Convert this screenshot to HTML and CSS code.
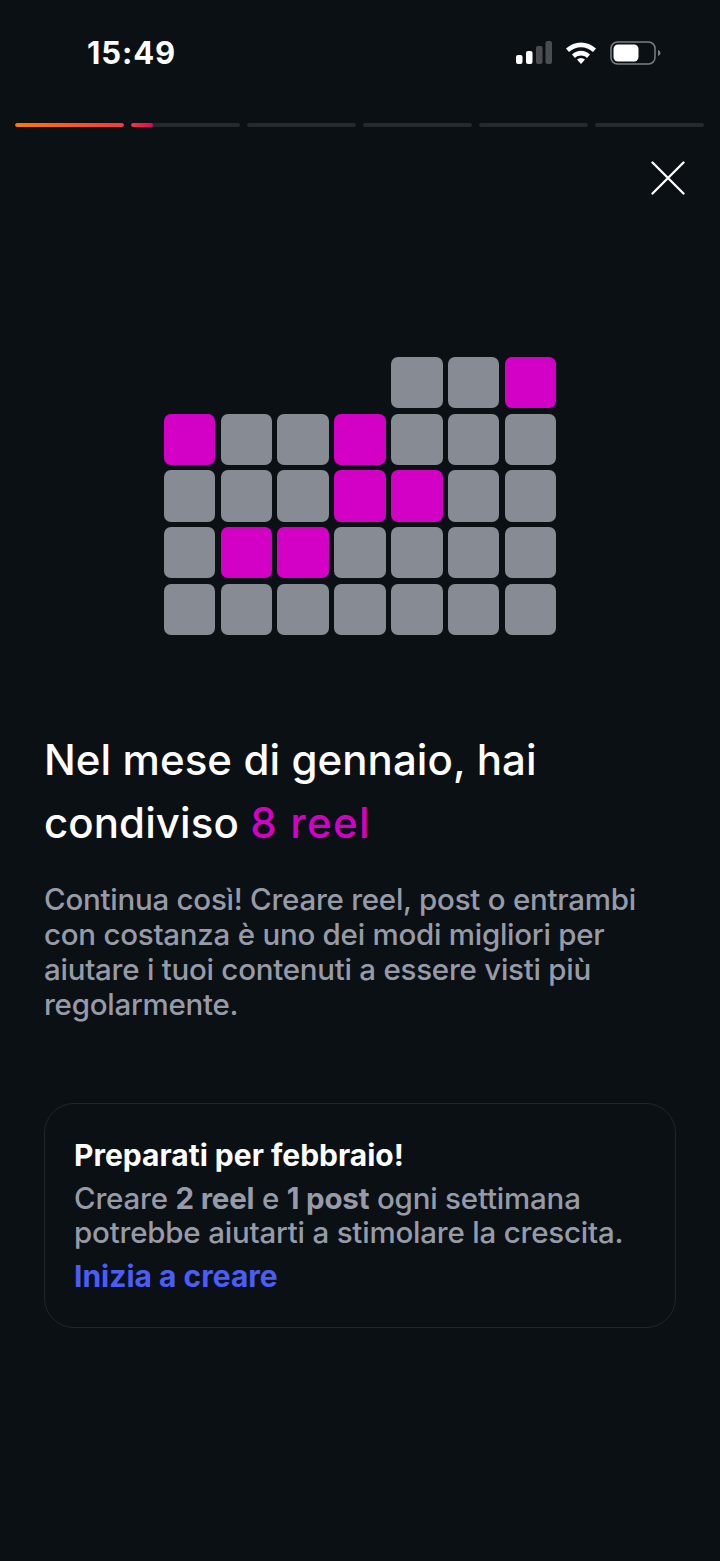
FILE: index.html
```html
<!DOCTYPE html>
<html lang="it">
<head>
    <meta charset="UTF-8">
    <meta name="viewport" content="width=device-width, initial-scale=1.0">
    <title>Reel di gennaio</title>
    <link rel="stylesheet" href="styles.css">
</head>
<body>
    <div class="status-bar">
        <span class="clock">15:49</span>
        <div class="status-icons">
            <svg class="signal" width="36" height="24" viewBox="0 0 36 24">
                <rect x="0" y="14" width="6.5" height="9" rx="2" fill="#fff"/>
                <rect x="10" y="10" width="6.5" height="13" rx="2" fill="#fff"/>
                <rect x="20" y="5" width="6.5" height="18" rx="2" fill="#4a4d50"/>
                <rect x="29.500" y="0" width="6.5" height="23" rx="2" fill="#4a4d50"/>
            </svg>
            <svg class="wifi" width="32" height="24" viewBox="0 0 32 24">
                <path d="M1 7.500 C9.500 -0.500 22.500 -0.500 31 7.500 L28 11 C21 4.500 11 4.500 4 11 Z" fill="#fff"/>
                <path d="M7 13.500 C12.500 8.500 19.500 8.500 25 13.500 L22 17 C18.500 13.800 13.500 13.800 10 17 Z" fill="#fff"/>
                <path d="M12 18.500 C14.500 16.500 17.500 16.500 20 18.500 L16 23 Z" fill="#fff"/>
            </svg>
            <svg class="battery" width="51" height="24" viewBox="0 0 51 24">
                <rect x="1" y="1" width="44" height="22" rx="6.500" fill="none" stroke="#7c7f82" stroke-width="1.500"/>
                <rect x="3.500" y="3.500" width="25" height="17" rx="4.500" fill="#fff"/>
                <path d="M48 9 C50 10 50.500 11 50.500 12 C50.500 13 50 14 48 15 Z" fill="#7c7f82"/>
            </svg>
        </div>
    </div>

    <div class="progress">
        <div class="segment"><div class="fill fill-done"></div></div>
        <div class="segment"><div class="fill fill-current"></div></div>
        <div class="segment"></div>
        <div class="segment"></div>
        <div class="segment"></div>
        <div class="segment"></div>
    </div>

    <div class="close-row">
        <svg class="close" width="34" height="34" viewBox="0 0 34 34">
            <path d="M1.500 1.500 L32.500 32.500 M32.500 1.500 L1.500 32.500" stroke="#fff" stroke-width="2.300" stroke-linecap="round"/>
        </svg>
    </div>

    <div class="calendar">
        <div class="day empty"></div><div class="day empty"></div><div class="day empty"></div><div class="day empty"></div><div class="day"></div><div class="day"></div><div class="day on"></div>
        <div class="day on"></div><div class="day"></div><div class="day"></div><div class="day on"></div><div class="day"></div><div class="day"></div><div class="day"></div>
        <div class="day"></div><div class="day"></div><div class="day"></div><div class="day on"></div><div class="day on"></div><div class="day"></div><div class="day"></div>
        <div class="day"></div><div class="day on"></div><div class="day on"></div><div class="day"></div><div class="day"></div><div class="day"></div><div class="day"></div>
        <div class="day"></div><div class="day"></div><div class="day"></div><div class="day"></div><div class="day"></div><div class="day"></div><div class="day"></div>
    </div>

    <div class="content">
        <h1 class="title">Nel mese di gennaio, hai condiviso <span class="accent">8 reel</span></h1>
        <p class="lead">Continua così! Creare reel, post o entrambi con costanza è uno dei modi migliori per aiutare i tuoi contenuti a essere visti più regolarmente.</p>

        <div class="tip">
            <h2 class="tip-title">Preparati per febbraio!</h2>
            <p class="tip-text">Creare <b>2 reel</b> e <b>1 post</b> ogni settimana potrebbe aiutarti a stimolare la crescita.</p>
            <a class="tip-link">Inizia a creare</a>
        </div>
    </div>
</body>
</html>
```

FILE: styles.css
```css
html, body { margin: 0; padding: 0; }
body { width: 720px; height: 1561px; overflow: hidden; background-color: #0b1015; font-family: Inter, "Noto Sans", sans-serif; color: #fff; }

.status-bar { display: flex; justify-content: space-between; align-items: center; height: 46px; padding: 30px 59px 0 87px; }
.clock { font-size: 31px; font-weight: 700; line-height: 46px; letter-spacing: 0.9px; }
.status-icons { display: flex; align-items: center; gap: 13px; }

.progress { display: flex; gap: 7px; margin: 47px 16px 0 15px; }
.segment { flex: 1; height: 4px; border-radius: 2px; background-color: #26292e; overflow: hidden; }
.fill { height: 100%; border-radius: 2px; }
.fill-done { width: 100%; background: linear-gradient(90deg, #ff7a00, #f9373f); }
.fill-current { width: 20%; background: linear-gradient(90deg, #f9373f, #e6005f); }

.close-row { display: flex; justify-content: flex-end; padding: 34px 35px 0 0; }

.calendar { display: grid; grid-template-columns: repeat(7, 51.500px); grid-auto-rows: 51.200px; gap: 5.500px 5.300px; justify-content: center; margin-top: 162px; }
.day { border-radius: 7px; background-color: #868b94; }
.day.on { background-color: #d300c5; }
.day.empty { background: none; }

.content { padding: 0 44px; }
.title { margin: 93px 0 0; font-size: 42px; font-weight: 500; line-height: 63px; letter-spacing: 0.080px; }
.accent { color: #d300c5; letter-spacing: 1.300px; }
.lead { margin: 28px 0 0; font-size: 29.500px; font-weight: 450; line-height: 35px; letter-spacing: -0.250px; color: #979ba8; }

.tip { margin-top: 81px; height: 225px; box-sizing: border-box; padding: 32px 29px 0; border: 1px solid #22262b; border-radius: 30px; }
.tip-title { margin: 0; font-size: 30px; font-weight: 700; line-height: 38px; }
.tip-text { margin: 7px 0 0; font-size: 29.500px; font-weight: 450; line-height: 34.500px; letter-spacing: -0.200px; color: #979ba8; }
.tip-text b { font-weight: 700; }
.tip-link { display: block; margin-top: 7px; font-size: 30px; font-weight: 700; line-height: 38px; color: #4a5df9; }
```
